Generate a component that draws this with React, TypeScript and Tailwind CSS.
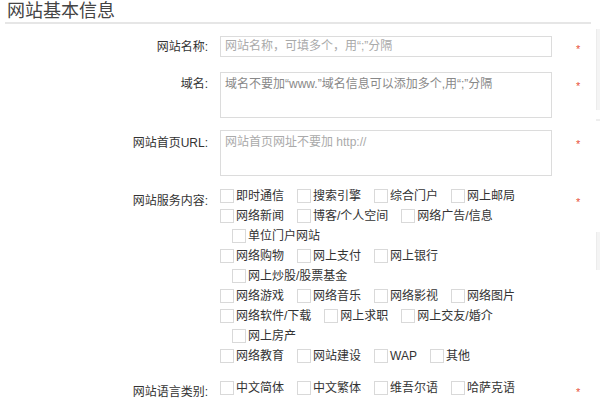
import React from "react";

const FONT = { fontFamily: '"Liberation Sans", "Noto Sans CJK SC", sans-serif' };

const SERVICE_ROWS: { indent?: boolean; items: string[] }[] = [
  { items: ["即时通信", "搜索引擎", "综合门户", "网上邮局"] },
  { items: ["网络新闻", "博客/个人空间", "网络广告/信息"] },
  { indent: true, items: ["单位门户网站"] },
  { items: ["网络购物", "网上支付", "网上银行"] },
  { indent: true, items: ["网上炒股/股票基金"] },
  { items: ["网络游戏", "网络音乐", "网络影视", "网络图片"] },
  { items: ["网络软件/下载", "网上求职", "网上交友/婚介"] },
  { indent: true, items: ["网上房产"] },
  { items: ["网络教育", "网站建设", "WAP", "其他"] },
];

const LANGS = ["中文简体", "中文繁体", "维吾尔语", "哈萨克语"];

// 必填标记：高度为 0，不撑开所在行
function Star({ top }: { top: number }) {
  return (
    <div className="ml-[24px] w-[10px] h-0">
      <div className="text-[#e8503a] text-[11px] leading-none" style={{ marginTop: top }}>*</div>
    </div>
  );
}

function Check({ label }: { label: string }) {
  return (
    <label className="flex items-center mr-[13px]">
      <span className="w-[14px] h-[14px] border border-[#d9d9d9] bg-white shrink-0" />
      <span className="ml-[2px] text-[12px] text-[#333] whitespace-nowrap">{label}</span>
    </label>
  );
}

export default function App() {
  return (
    <div className="w-[600px] h-[400px] overflow-hidden bg-white flex" style={FONT}>
      <div className="w-[596px] shrink-0">
        <div className="mx-[5px] pl-[2px] border-b-2 border-[#e6e6e6] h-[24px] text-[18px] leading-[22px] text-[#444]">
          网站基本信息
        </div>

        {/* 网站名称 */}
        <div className="flex mt-[12px]">
          <div className="w-[208px] text-right text-[12px] text-[#333] leading-[22px]">网站名称:</div>
          <div className="ml-[12px] w-[332px] h-[21px] border border-[#dcdcdc] px-[4px] text-[12px] leading-[19px] text-[#aaa]">
            网站名称，可填多个，用“;”分隔
          </div>
          <Star top={8} />
        </div>

        {/* 域名 */}
        <div className="flex mt-[14px]">
          <div className="w-[208px] text-right text-[12px] leading-[16px] text-[#333] pt-[4px]">域名:</div>
          <div className="ml-[12px] w-[332px] h-[46px] border border-[#dcdcdc] px-[4px] pt-[3px] text-[12px] leading-[16px] text-[#888]">
            域名不要加“www.”域名信息可以添加多个,用“;”分隔
          </div>
          <Star top={9} />
        </div>

        {/* URL */}
        <div className="flex mt-[12px]">
          <div className="w-[208px] text-right text-[12px] leading-[16px] text-[#333] pt-[5px]">网站首页URL:</div>
          <div className="ml-[12px] w-[332px] h-[46px] border border-[#dcdcdc] px-[4px] pt-[3px] text-[12px] leading-[16px] text-[#aaa]">
            网站首页网址不要加 http://
          </div>
          <Star top={9} />
        </div>

        {/* 服务内容 */}
        <div className="flex mt-[10px]">
          <div className="w-[208px] text-right text-[12px] leading-[16px] text-[#333] pt-[7px]">网站服务内容:</div>
          <div className="ml-[12px] w-[332px]">
            {SERVICE_ROWS.map((row, i) => (
              <div key={i} className={`flex items-center h-[20px] ${row.indent ? "pl-[12px]" : ""}`}>
                {row.items.map((it) => <Check key={it} label={it} />)}
              </div>
            ))}
          </div>
          <Star top={11} />
        </div>

        {/* 语言类别 */}
        <div className="flex mt-[12px]">
          <div className="w-[208px] text-right text-[12px] leading-[16px] text-[#333] pt-[6px]">网站语言类别:</div>
          <div className="ml-[12px] w-[332px]">
            <div className="flex items-center h-[20px]">
              {LANGS.map((it) => <Check key={it} label={it} />)}
            </div>
            {/* 下一行只露出复选框的上沿 */}
            <div className="flex items-start pt-[3px] gap-[63px]">
              <span className="w-[14px] h-[14px] border border-[#d9d9d9]" />
              <span className="w-[14px] h-[14px] border border-[#d9d9d9]" />
              <span className="w-[14px] h-[14px] border border-[#d9d9d9]" />
              <span className="w-[14px] h-[14px] border border-[#d9d9d9]" />
            </div>
          </div>
          <Star top={9} />
        </div>
      </div>

      {/* 右侧面板边缘 */}
      <div className="w-[4px] shrink-0">
        <div className="mt-[29px] h-[81px] bg-[#f4f4f4] border-l border-[#ececec]" />
        <div className="mt-[9px] h-[2px] bg-[#eeeeee]" />
        <div className="mt-[111px] h-[38px] bg-[#f4f4f4] border-l border-[#ececec]" />
      </div>
    </div>
  );
}
